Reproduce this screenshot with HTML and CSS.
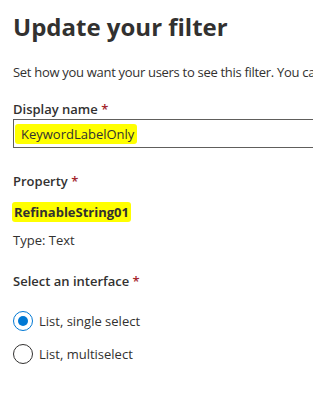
FILE: index.html
```html
<!DOCTYPE html>
<html lang="en">
  <head>
    <meta charset="UTF-8" />
    <title>Update your filter</title>
    <link rel="stylesheet" href="styles.css">
  </head>
  <body>
    <div class="panel">
      <h1 class="panel-title">Update your filter</h1>
      <p class="panel-intro">Set how you want your users to see this filter. You can change it later.</p>

      <div class="field field-name">
        <label class="field-label">Display name <span class="req">*</span></label>
        <div class="text-input">
          <span class="marker marker-input">KeywordLabelOnly</span>
        </div>
      </div>

      <div class="field field-property">
        <div class="field-label">Property <span class="req">*</span></div>
        <div class="property-value"><span class="marker">RefinableString01</span></div>
        <div class="property-type">Type: Text</div>
      </div>

      <div class="field field-interface">
        <div class="field-label">Select an interface <span class="req">*</span></div>
        <div class="choices">
          <div class="choice">
            <span class="radio checked"></span>
            <span>List, single select</span>
          </div>
          <div class="choice">
            <span class="radio"></span>
            <span>List, multiselect</span>
          </div>
        </div>
      </div>
    </div>
  </body>
</html>
```

FILE: styles.css
```css
body {
  margin: 0;
  background-color: #fff;
  font-family: "Open Sans", "Noto Sans", sans-serif;
  color: #323130;
  overflow: hidden;
}

.panel {
  padding: 9px 0 0 13px;
  white-space: nowrap;
}

.panel-title {
  margin: 0;
  font-size: 24px;
  line-height: 36px;
  font-weight: 700;
}

.panel-intro {
  margin: 17px 0 0;
  font-size: 13px;
  line-height: 20px;
  letter-spacing: -0.3px;
}

.field-label {
  font-size: 13px;
  font-weight: 600;
  line-height: 20px;
}

.req {
  color: #a4262c;
}

.field-name {
  margin-top: 15px;
}

.text-input {
  height: 27px;
  border: 1px solid #605e5c;
  border-right: none;
  display: flex;
  align-items: center;
  padding-left: 1px;
  font-size: 13px;
}

/* yellow highlighter marks */
.marker {
  background-color: #ffff00;
  border-radius: 3px;
  padding: 1px 2px;
}

.marker-input {
  padding: 1px 3px 1px 6px;
}

.field-property {
  margin-top: 23px;
}

.property-value {
  margin-top: 11px;
  margin-left: -1px;
  font-size: 13px;
  font-weight: 700;
  line-height: 20px;
}

.property-type {
  margin-top: 8px;
  font-size: 13px;
  line-height: 20px;
}

.field-interface {
  margin-top: 21px;
}

.choices {
  margin-top: 20px;
  display: flex;
  flex-direction: column;
  gap: 13px;
}

.choice {
  display: flex;
  align-items: center;
  gap: 6px;
  font-size: 13px;
  line-height: 20px;
}

.radio {
  width: 18px;
  height: 18px;
  border: 1px solid #323130;
  border-radius: 50%;
  display: flex;
  align-items: center;
  justify-content: center;
}

.radio.checked {
  border-color: #0078d4;
}

.radio.checked::after {
  content: "";
  width: 10px;
  height: 10px;
  border-radius: 50%;
  background-color: #0078d4;
}
```
